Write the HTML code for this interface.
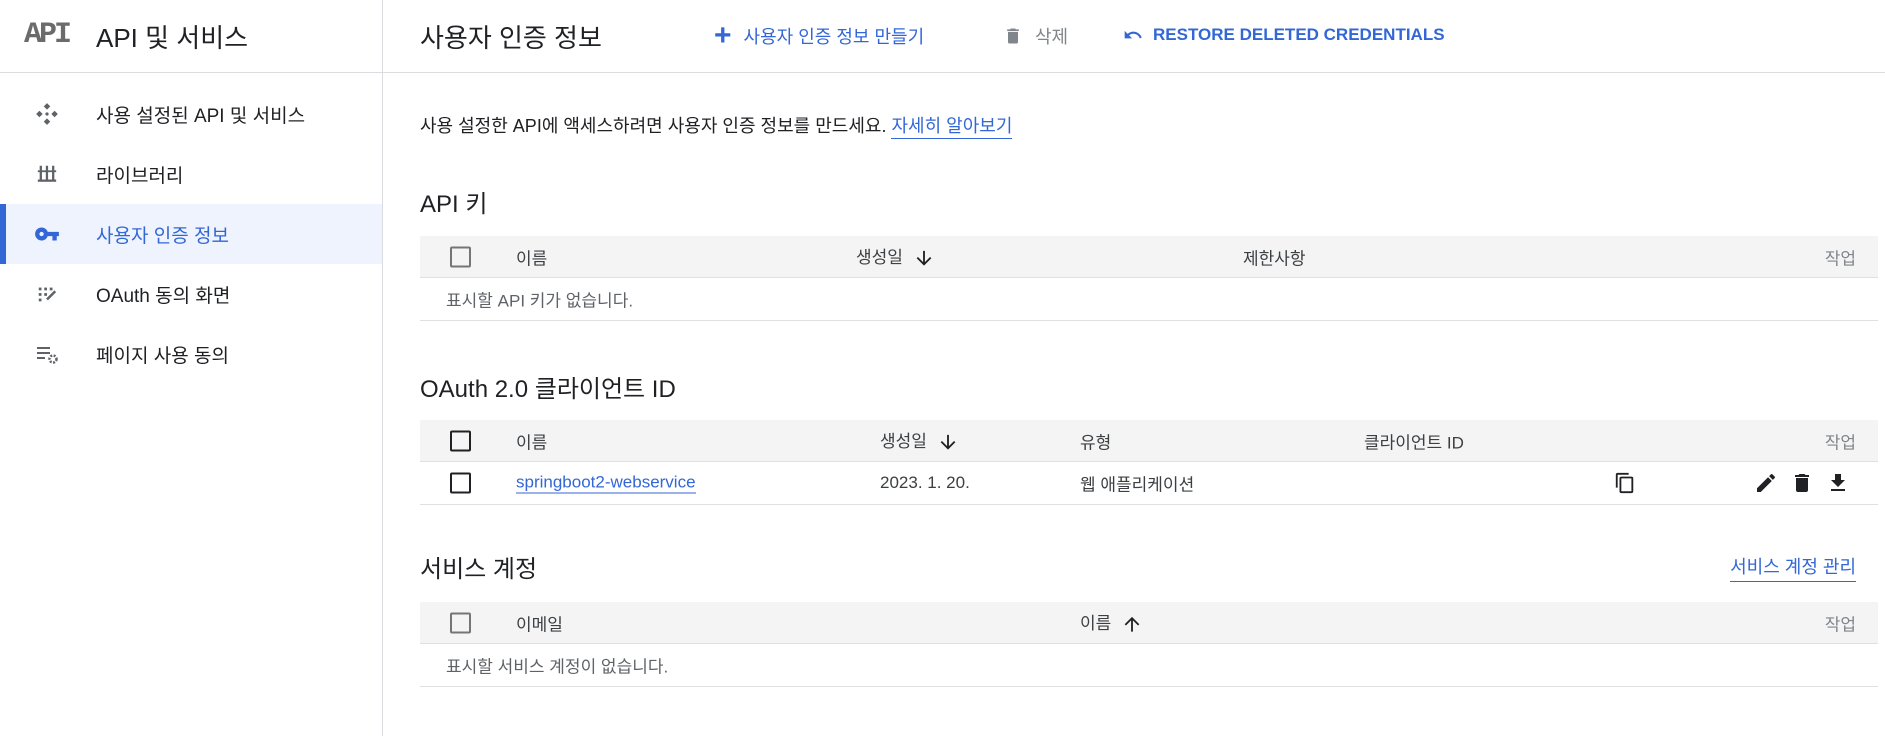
<!DOCTYPE html>
<html><head><meta charset="utf-8"><style>
*{box-sizing:border-box;margin:0;padding:0}
body{width:1885px;height:736px;overflow:hidden;background:#fff;font-family:"Liberation Sans","Noto Sans CJK KR",sans-serif;color:#202124;position:relative}
.abs{position:absolute}
.side{left:0;top:0;width:383px;height:736px;border-right:1px solid #dadce0}
.hline{left:0;top:72px;width:1885px;height:1px;background:#dadce0}
.nav{left:0;width:382px;height:60px;display:flex;align-items:center;font-size:19px}
.nav .ic{width:96px;display:flex;justify-content:center;padding-right:2px}
.act{background:#eef3fd;color:#3367d6}
.act:before{content:"";position:absolute;left:0;top:0;width:6px;height:60px;background:#3367d6}
.tbl{left:420px;width:1458px}
.th{background:#f4f4f4;border-bottom:1px solid #e0e0e0;height:42px;position:relative;font-size:17px;color:#3c4043}
.tr{border-bottom:1px solid #e0e0e0;height:43px;position:relative;font-size:17px;color:#3c4043}
.c{position:absolute;top:50%;transform:translateY(-50%);white-space:nowrap}
.cb{width:21px;height:21px;border:2.5px solid #202124;border-radius:2px}
.cb.g{border-color:#757575}
.h2{font-size:24px;left:420px}
.blue{color:#3367d6}
.ar{display:inline-block;vertical-align:middle;margin-left:10px}
</style></head><body>
<div class="abs side"></div>
<div class="abs hline"></div>
<div class="abs" style="left:24px;top:18px;font-family:'Liberation Mono',monospace;font-weight:bold;font-size:30px;color:#6b6b6b;letter-spacing:-3px">API</div>
<div class="abs" style="left:96px;top:18px;font-size:26px">API 및 서비스</div>

<div class="abs nav" style="top:84px"><div class="ic"><svg width="26" height="26" viewBox="0 0 24 24" fill="#5f6368"><path d="M12 2l3 3-3 3-3-3zM12 16l3 3-3 3-3-3zM2 12l3-3 3 3-3 3zM16 12l3-3 3 3-3 3z"/><circle cx="12" cy="12" r="1.5"/></svg></div>사용 설정된 API 및 서비스</div>
<div class="abs nav" style="top:144px"><div class="ic"><svg width="22" height="22" viewBox="0 0 24 24" fill="#5f6368"><rect x="4" y="3" width="2.5" height="15"/><rect x="10.7" y="3" width="2.5" height="15"/><rect x="17.5" y="3" width="2.5" height="15"/><rect x="2" y="18" width="20" height="2.5"/><rect x="2" y="8" width="20" height="2"/></svg></div>라이브러리</div>
<div class="abs nav act" style="top:204px"><div class="ic"><svg width="26" height="26" viewBox="0 0 24 24" fill="#3367d6"><path d="M12.65 10A6 6 0 1 0 12.65 14H17v4h4v-4h2v-4H12.65zM7 14a2 2 0 1 1 0-4 2 2 0 0 1 0 4z"/></svg></div>사용자 인증 정보</div>
<div class="abs nav" style="top:264px"><div class="ic"><svg width="22" height="22" viewBox="0 0 24 24" fill="#5f6368"><rect x="3" y="5" width="3" height="3"/><rect x="9" y="5" width="3" height="3"/><rect x="15" y="5" width="3" height="3"/><rect x="3" y="11" width="3" height="3"/><rect x="3" y="17" width="3" height="3"/><rect x="9" y="11" width="3" height="3"/><path d="M20 8l2 2-9 9-2-2z"/></svg></div>OAuth 동의 화면</div>
<div class="abs nav" style="top:324px"><div class="ic"><svg width="24" height="24" viewBox="0 0 24 24" fill="#5f6368"><rect x="2" y="5" width="13" height="2"/><rect x="2" y="10" width="13" height="2"/><rect x="2" y="15" width="8" height="2"/><circle cx="18" cy="17" r="3.5" fill="none" stroke="#5f6368" stroke-width="2.5" stroke-dasharray="2 1.4"/></svg></div>페이지 사용 동의</div>

<div class="abs" style="left:420px;top:18px;font-size:26px">사용자 인증 정보</div>
<div class="abs blue" style="left:714px;top:23px;font-size:18px;display:flex;align-items:center"><span style="font-size:30px;font-weight:bold;margin-right:12px;line-height:22px">+</span>사용자 인증 정보 만들기</div>
<div class="abs" style="left:1003px;top:23px;font-size:18px;color:#80868b;display:flex;align-items:center"><svg width="20" height="24" viewBox="0 0 24 24" fill="#80868b" style="margin-right:12px"><path d="M6 19a2 2 0 0 0 2 2h8a2 2 0 0 0 2-2V7H6zM19 4h-3.5l-1-1h-5l-1 1H5v2h14z"/></svg>삭제</div>
<div class="abs blue" style="left:1121px;top:25px;font-size:17px;font-weight:bold;display:flex;align-items:center"><svg width="24" height="20" viewBox="0 0 24 24" fill="#3367d6" style="margin-right:8px"><path d="M12.5 8c-2.65 0-5.05 1-6.9 2.6L2 7v9h9l-3.62-3.62c1.39-1.16 3.16-1.88 5.12-1.88 3.54 0 6.55 2.31 7.6 5.5l2.37-.78C21.08 11.03 17.15 8 12.5 8z"/></svg>RESTORE DELETED CREDENTIALS</div>

<div class="abs" style="left:420px;top:112px;font-size:18px">사용 설정한 API에 액세스하려면 사용자 인증 정보를 만드세요. <span class="blue" style="border-bottom:1.5px solid #3367d6;padding-bottom:2px">자세히 알아보기</span></div>

<div class="abs h2" style="top:184px">API 키</div>
<div class="abs tbl" style="top:236px">
<div class="th"><div class="c cb g" style="left:30px"></div><div class="c" style="left:96px">이름</div><div class="c" style="left:436px">생성일<svg class="ar" width="22" height="24" viewBox="0 0 24 24" fill="#202124"><path d="M20 12l-1.41-1.41L13 16.17V4h-2v12.17l-5.58-5.59L4 12l8 8z"/></svg></div><div class="c" style="left:823px">제한사항</div><div class="c" style="right:22px;color:#80868b">작업</div></div>
<div class="tr"><div class="c" style="left:26px;color:#5f6368">표시할 API 키가 없습니다.</div></div>
</div>

<div class="abs h2" style="top:369px">OAuth 2.0 클라이언트 ID</div>
<div class="abs tbl" style="top:420px">
<div class="th"><div class="c cb" style="left:30px"></div><div class="c" style="left:96px">이름</div><div class="c" style="left:460px">생성일<svg class="ar" width="22" height="24" viewBox="0 0 24 24" fill="#202124"><path d="M20 12l-1.41-1.41L13 16.17V4h-2v12.17l-5.58-5.59L4 12l8 8z"/></svg></div><div class="c" style="left:660px">유형</div><div class="c" style="left:944px">클라이언트 ID</div><div class="c" style="right:22px;color:#80868b">작업</div></div>
<div class="tr"><div class="c cb" style="left:30px"></div><div class="c blue" style="left:96px;border-bottom:1.5px solid #3367d6">springboot2-webservice</div><div class="c" style="left:460px">2023. 1. 20.</div><div class="c" style="left:660px">웹 애플리케이션</div>
<svg class="c" style="left:1194px" width="22" height="22" viewBox="0 0 24 24" fill="#202124"><path d="M16 1H4a2 2 0 0 0-2 2v14h2V3h12zm3 4H8a2 2 0 0 0-2 2v14a2 2 0 0 0 2 2h11a2 2 0 0 0 2-2V7a2 2 0 0 0-2-2zm0 16H8V7h11z"/></svg>
<svg class="c" style="left:1334px" width="24" height="24" viewBox="0 0 24 24" fill="#202124"><path d="M3 17.25V21h3.75L17.8 9.94l-3.75-3.75zM20.7 7.04a1 1 0 0 0 0-1.41l-2.34-2.34a1 1 0 0 0-1.41 0l-1.83 1.83 3.75 3.75z"/></svg>
<svg class="c" style="left:1370px" width="24" height="24" viewBox="0 0 24 24" fill="#202124"><path d="M6 19a2 2 0 0 0 2 2h8a2 2 0 0 0 2-2V7H6zM19 4h-3.5l-1-1h-5l-1 1H5v2h14z"/></svg>
<svg class="c" style="left:1406px" width="24" height="24" viewBox="0 0 24 24" fill="#202124"><path d="M19 9h-4V3H9v6H5l7 7zM5 18v2h14v-2z"/></svg>
</div>
</div>

<div class="abs h2" style="top:549px">서비스 계정</div>
<div class="abs blue" style="right:29px;top:553px;font-size:18px;border-bottom:1.5px solid #3367d6;padding-bottom:2px">서비스 계정 관리</div>
<div class="abs tbl" style="top:602px">
<div class="th"><div class="c cb g" style="left:30px"></div><div class="c" style="left:96px">이메일</div><div class="c" style="left:660px">이름<svg class="ar" width="22" height="24" viewBox="0 0 24 24" fill="#202124"><path d="M4 12l1.41 1.41L11 7.83V20h2V7.83l5.58 5.59L20 12l-8-8z"/></svg></div><div class="c" style="right:22px;color:#80868b">작업</div></div>
<div class="tr"><div class="c" style="left:26px;color:#5f6368">표시할 서비스 계정이 없습니다.</div></div>
</div>
</body></html>
